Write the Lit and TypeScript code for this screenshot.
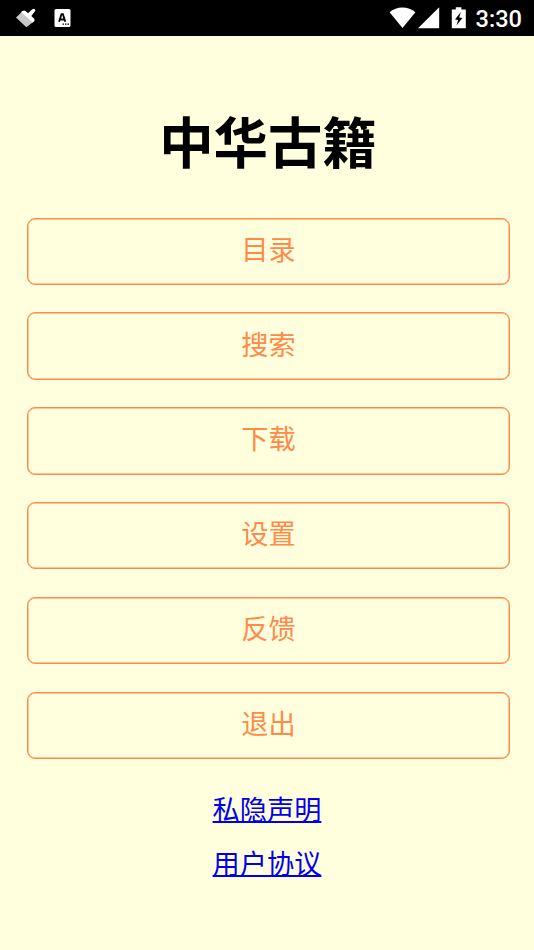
import { LitElement, html, css } from "lit";
import { customElement } from "lit/decorators.js";

@customElement("app-root")
export class AppRoot extends LitElement {
  static styles = css`
    :host { display: block; height: 950px; background: #ffffde; font-family: "Noto Sans CJK SC", sans-serif; overflow: hidden; }
    .bar { box-sizing: border-box; height: 36px; padding: 0 12px 0 15px; background: #000; color: #fff; display: flex; align-items: center; }
    .bar svg { display: block; flex: none; }
    .status { display: flex; margin-left: auto; }
    .time { font: 500 23.6px/36px Roboto, sans-serif; margin-left: 10px; padding-top: 1px; height: 35px; }
    h1 { margin: 64px 0 0 2px; font-size: 54.4px; line-height: 80px; font-weight: 700; text-align: center; color: #000; }
    .menu { display: grid; grid-template-rows: 67px 68px 68px 68px 68px 67px; row-gap: 27px; margin: 38px 24px 0 27px; }
    .btn { box-sizing: border-box; border: 1px solid #ff8a4a; box-shadow: inset 0 0 0 0.5px #ff8a4a; border-radius: 8px; background: none; color: #ff8a4a; font: 400 27.2px/40px "Noto Sans CJK SC", sans-serif; padding: 0 0 7px; }
    .btn:nth-child(3) { padding-bottom: 8px; }
    .btn:nth-child(4), .btn:nth-child(5) { height: 67px; padding-bottom: 8px; }
    .links { display: flex; flex-direction: column; align-items: center; margin-top: 29px; gap: 14px; }
    a { color: #0000ee; font-size: 27.2px; line-height: 40px; text-decoration: underline; text-decoration-thickness: 1.5px; text-underline-offset: 1px; text-decoration-skip-ink: none; }
  `;
  render() {
    return html`
      <div class="bar">
        <svg width="60" height="36" viewBox="15 0 60 36">
          <path fill="#c8c8c8" d="M21.3 12.5 16 17.5 26.3 27.2 32.5 22.5Z"/>
          <path fill="#fff" d="M22 11.2Q24 9.8 25.5 11L28 13.2 32.3 9.2Q33.7 8.3 34.8 9.3Q35.8 10.4 34.8 11.6L31.3 16 34.3 18.7Q35.2 20.2 33.8 21.7L32.5 22.7 21 12.5Z"/>
          <rect x="54.5" y="9" width="16" height="18" rx="1.6" fill="#fff"/>
          <path d="M59.1 21.7 61.5 14.2H62.9L65.3 21.7M60 19.5H64.4" fill="none" stroke="#000" stroke-width="1.8"/>
          <path d="M62.5 24.2H64M65 24.2H66.5M67.5 24.2H69" stroke="#000" stroke-width="1.2"/>
        </svg>
        <div class="status">
          <svg width="77" height="36" viewBox="389 0 77 36" fill="#fff">
            <path d="M389.6 12.3Q395 7.5 402.5 7.5T415.4 12.3L402.5 28Z"/>
            <path d="M439.2 7.2V28.3H418Z"/>
            <path fill-rule="evenodd" d="M455.8 7.2H461.4V9.4H465.8V28.2H451.8V9.4H455.8ZM460.8 12 455 19.5 458.2 20 456.5 25.5 462.4 18 459.2 17.4Z"/>
          </svg>
          <span class="time">3:30</span>
        </div>
      </div>
      <h1>中华古籍</h1>
      <div class="menu">${["目录", "搜索", "下载", "设置", "反馈", "退出"].map((t) => html`<button class="btn">${t}</button>`)}</div>
      <div class="links"><a href="#">私隐声明</a><a href="#">用户协议</a></div>
    `;
  }
}
